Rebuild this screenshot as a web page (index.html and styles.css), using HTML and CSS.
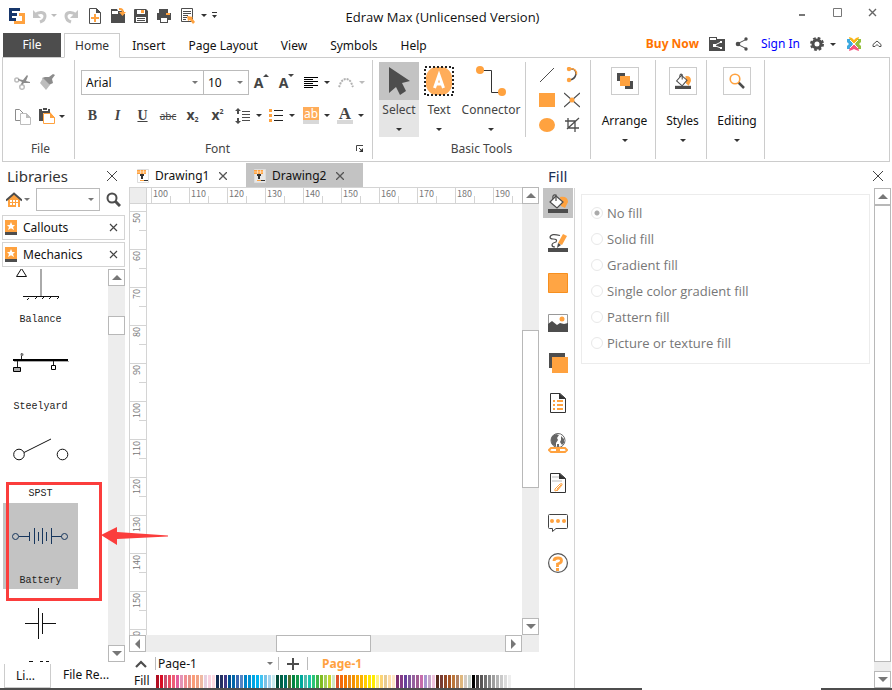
FILE: index.html
```html
<!DOCTYPE html>
<html lang="en">
<head>
<meta charset="utf-8">
<title>Edraw Max (Unlicensed Version)</title>
<link rel="stylesheet" href="styles.css">
</head>
<body>
<header class="titlebar">
  <div class="quick">
    <svg class="logo" width="17" height="16" viewBox="0 0 17 16" shape-rendering="crispEdges"><path fill="#17366b" d="M1 0h11v3H4v2h5v3H4v2h4v3H1z"/><path fill="#ffa23f" d="M11 5h6v11H6v-3h8V8h-3z"/></svg>
    <button class="tool" aria-label="Undo"><svg width="16" height="16" viewBox="0 0 16 16"><path fill="none" stroke="#c4c4c4" stroke-width="3" d="M3 7C7 3 13 4 13 8c0 3-2 5-5 6"/><path fill="#c4c4c4" d="M1 2v8h8z"/></svg></button>
    <span class="caret pale"></span>
    <button class="tool redo" aria-label="Redo"><svg width="16" height="16" viewBox="0 0 16 16"><path fill="none" stroke="#c4c4c4" stroke-width="3" d="M13 7C9 3 3 4 3 8c0 3 2 5 5 6"/><path fill="#c4c4c4" d="M15 2v8H7z"/></svg></button>
    <button class="tool wide" aria-label="New"><svg width="16" height="16" viewBox="0 0 16 16"><path fill="#fff" stroke="#4d4d4d" d="M2.500.5h7l4 4v11h-11z"/><path fill="#4d4d4d" d="M9 0l5 5H9z"/><path stroke="#ffa23f" stroke-width="2" d="M4 10h8M8 6v8"/></svg></button>
    <button class="tool wide" aria-label="Open"><svg width="16" height="16" viewBox="0 0 16 16"><path fill="#4d4d4d" d="M1 1h6l1 2h6v3h1v9H1z"/><path fill="#fff" d="M2 3h6v3H2z"/><path fill="none" stroke="#ffa23f" stroke-width="2" d="M9 1h1q3 0 3 4"/><path fill="#ffa23f" d="M9 4h7l-3.500 4z"/></svg></button>
    <button class="tool wide" aria-label="Save"><svg width="16" height="16" viewBox="0 0 16 16"><path fill="#4d4d4d" d="M1 2q0-1 1-1h11l2 2v12H1z"/><path fill="#fff" d="M4 2h8v4H4zM3 9h10v5H3z"/><path fill="#ffa23f" d="M8 2h3v3H8z"/><path stroke="#4d4d4d" d="M4 10.500h8M4 12.500h8"/></svg></button>
    <button class="tool wide" aria-label="Print"><svg width="16" height="16" viewBox="0 0 16 16"><path fill="#4d4d4d" d="M3 1h9v4h3v7h-3v3H4v-3H1V5h2z"/><path fill="#fff" d="M5 10h6v4H5z"/><path fill="#ffa23f" d="M10 5h4v2h-4z"/></svg></button>
    <button class="tool wide" aria-label="Preview"><svg width="16" height="16" viewBox="0 0 16 16"><path fill="#fff" stroke="#4d4d4d" d="M2.500.5h11v13h-11z"/><path stroke="#4d4d4d" d="M4 3.500h8M4 5.500h8M4 7.500h5M4 9.500h4M4 11.500h3"/><path fill="#ffa23f" d="M8 8l6 1-1 1 3 4-2 2-3-4-2 1z"/></svg></button>
    <span class="caret"></span>
    <button class="tool more" aria-label="Customize"><svg width="7" height="7" viewBox="0 0 7 7"><path fill="#333" d="M1 0h5v1H1zM1 3h5L3.500 6z"/></svg></button>
  </div>
  <h1 class="title">Edraw Max (Unlicensed Version)</h1>
  <div class="window-buttons">
    <button class="tool" aria-label="Minimize"><svg width="9" height="9" viewBox="0 0 9 9"><path fill="#777" d="M1 6h6v2H1z"/></svg></button>
    <button class="tool" aria-label="Maximize"><svg width="9" height="9" viewBox="0 0 9 9"><path fill="none" stroke="#777" d="M.5.5h8v8h-8z"/></svg></button>
    <button class="tool" aria-label="Close window"><svg width="9" height="9" viewBox="0 0 9 9"><path stroke="#666" stroke-width="1.400" d="M1 1l7 7M8 1L1 8"/></svg></button>
  </div>
</header>

<nav class="menubar">
  <button class="file-tab">File</button>
  <button class="menu-tab active">Home</button>
  <button class="menu-tab">Insert</button>
  <button class="menu-tab">Page Layout</button>
  <button class="menu-tab">View</button>
  <button class="menu-tab">Symbols</button>
  <button class="menu-tab">Help</button>
  <div class="account">
    <a class="buy" href="#">Buy Now</a>
    <button class="tool" aria-label="Share folder"><svg width="16" height="14" viewBox="0 0 16 14"><path fill="#4d4d4d" d="M0 0h8v2h8v12H0z"/><path fill="#fff" d="M1 1h6v2H1z"/><path stroke="#fff" fill="none" d="M12 5L5 8.500 12 11"/><path fill="#fff" d="M11 4h2v2h-2zM4 7h3v3H4zM11 10h2v2h-2z"/></svg></button>
    <button class="tool" aria-label="Share"><svg width="14" height="14" viewBox="0 0 14 14"><path stroke="#4d4d4d" fill="none" d="M12 2L2 7l10 5"/><circle cx="11" cy="2" r="1.700" fill="#4d4d4d"/><circle cx="3" cy="7" r="2.300" fill="#4d4d4d"/><circle cx="11" cy="12" r="1.700" fill="#4d4d4d"/></svg></button>
    <a class="signin" href="#">Sign In</a>
    <button class="tool gear" aria-label="Options"><svg width="14" height="14" viewBox="0 0 14 14"><circle cx="7" cy="7" r="4" fill="none" stroke="#4d4d4d" stroke-width="3"/><circle cx="7" cy="7" r="6" fill="none" stroke="#4d4d4d" stroke-width="2" stroke-dasharray="2.700 2.012"/></svg></button>
    <span class="caret"></span>
    <button class="tool brand" aria-label="Community"><svg width="16" height="16" viewBox="0 0 16 16"><path fill="#fdb515" d="M3 1l3 1 2 2 2-2 3-1-1 4-4 3-4-3z"/><path fill="#3ba9e0" d="M1 3h3l3 5-3 5H1V10l2-2-2-2z"/><path fill="#94c13d" d="M15 3h-3L9 8l3 5h3v-3l-2-2 2-2z"/><path fill="#f8537e" d="M3 15l1-4 4-3 4 3 1 4-3-1-2-1-2 1z"/><path stroke="#fff" d="M4 4l8 8M12 4l-8 8"/></svg></button>
    <button class="tool" aria-label="Collapse ribbon"><svg width="10" height="8" viewBox="0 0 10 8"><path fill="none" stroke="#4d4d4d" d="M1 4.500L5 1l4 3.500v2H7L5 4.500l-2 2H1z"/></svg></button>
  </div>
</nav>

<section class="ribbon">
  <div class="group group-file">
    <div class="group-body clip-grid">
      <button class="tool" aria-label="Cut"><svg width="16" height="16" viewBox="0 0 16 16"><g fill="none" stroke="#bdbdbd" stroke-width="1.500"><circle cx="2.800" cy="6" r="2"/><circle cx="8" cy="13" r="2.300"/></g><path fill="#8c8c8c" d="M4 5l5 1 4-5 1 1-2 5 4 1v1l-6 0-2 2-1-1 1-2-4-2z"/></svg></button>
      <button class="tool" aria-label="Format painter"><svg width="16" height="16" viewBox="0 0 16 16"><path fill="#8c8c8c" d="M14 0l2 1-3 4 1 4-4 2-7-7 3-1 4 0z"/><path fill="#bdbdbd" d="M4 4l7 7-4 5-6-7z"/></svg></button>
      <button class="tool" aria-label="Copy"><svg width="17" height="17" viewBox="0 0 17 17"><path fill="#fff" stroke="#8c8c8c" d="M1.500 1.500h4l4 4v7h-8z"/><path fill="#fff" stroke="#bdbdbd" d="M6.500 5.500h6l4 4v7h-10z"/><path fill="#bdbdbd" d="M12 5l5 5h-5z"/></svg></button>
      <button class="tool paste" aria-label="Paste"><svg width="16" height="16" viewBox="0 0 16 16"><path fill="#4d4d4d" d="M0 1h3v2h6V1h2v4H4v8H0zM4 0h4v2H4z"/><path fill="#fff" stroke="#ffa23f" d="M4.500 5.500h7l4 4v6h-11z"/><path fill="#ffa23f" d="M11 4l5 6h-5z"/></svg><span class="caret"></span></button>
    </div>
    <div class="group-label">File</div>
  </div>

  <div class="group group-font">
    <div class="group-body font-body">
      <div class="tool-row">
        <span class="combo family"><select aria-label="Font"><option>Arial</option></select><span class="caret"></span></span>
        <span class="combo size"><select aria-label="Font size"><option>10</option></select><span class="caret"></span></span>
        <button class="tool key grow" aria-label="Grow font"><b>A</b><span class="up"></span></button>
        <button class="tool key grow" aria-label="Shrink font"><b>A</b><span class="down-mark"></span></button>
        <button class="tool split first" aria-label="Align"><svg width="15" height="12" viewBox="0 0 15 12"><path stroke="#000" d="M0 .5h14M0 2.500h9M0 4.500h14M0 6.500h9M0 8.500h14M0 10.500h9"/></svg><span class="caret"></span></button>
        <button class="tool split" aria-label="Text arc"><svg width="16" height="12" viewBox="0 0 16 12"><path fill="none" stroke="#b0b0b0" stroke-width="2" stroke-dasharray="2 1" d="M1 10q1-2 2-5 5-6 10 0 1 3 2 5"/></svg><span class="caret pale"></span></button>
      </div>
      <div class="tool-row">
        <button class="tool key serif"><b>B</b></button>
        <button class="tool key serif"><b><i>I</i></b></button>
        <button class="tool key serif"><b><u>U</u></b></button>
        <button class="tool key strike"><s>abc</s></button>
        <button class="tool key script"><b>x<sub>2</sub></b></button>
        <button class="tool key script"><b>x<sup>2</sup></b></button>
        <button class="tool split line" aria-label="Line spacing"><svg width="16" height="16" viewBox="0 0 16 16"><path fill="none" stroke="#4d4d4d" d="M7 3.500h8M7 6.500h8M7 9.500h8M7 12.500h8"/><path fill="#4d4d4d" d="M3 0l3 3H4v3H2V3H0zM3 16l3-3H4v-3H2v3H0z"/></svg><span class="caret"></span></button>
        <button class="tool split" aria-label="Bullets"><svg width="15" height="14" viewBox="0 0 15 14" shape-rendering="crispEdges"><path fill="#ffa23f" d="M0 0h3v3H0zM0 5h3v3H0zM0 10h3v3H0z"/><path fill="#222" d="M5 1h9v1H5zM5 6h9v1H5zM5 11h9v1H5z"/></svg><span class="caret"></span></button>
        <button class="tool split" aria-label="Highlight"><span class="swatch-icon mark">ab</span><span class="caret"></span></button>
        <button class="tool split" aria-label="Font color"><span class="swatch-icon ink">A</span><span class="caret"></span></button>
      </div>
    </div>
    <div class="group-label">Font</div>
    <button class="tool launcher" aria-label="Font settings"><svg width="8" height="8" viewBox="0 0 8 8"><path fill="none" stroke="#444" d="M.5 6V.5H7M3 3l3 3"/><path fill="#333" d="M7 3v4H3z"/></svg></button>
  </div>

  <div class="group group-basic">
    <div class="group-body basic-body">
      <button class="big selected"><span class="big-icon"><svg width="22" height="29" viewBox="0 0 22 29"><path fill="#4d4d4d" d="M1 0l21 14-8 2 4 8-6 4-4-8-7 6z"/></svg></span><span>Select</span><span class="caret"></span></button>
      <button class="big"><span class="big-icon"><svg width="30" height="30" viewBox="0 0 30 30"><rect x="2" y="1" width="26" height="28" rx="11" fill="#ffad5a"/><rect x="1" y="1" width="28" height="28" fill="none" stroke="#222" stroke-width="2" stroke-dasharray="2 2"/><path fill="none" stroke="#fff" stroke-width="3" d="M10.500 22L15 9l4.500 13M12 18h6"/></svg></span><span>Text</span><span class="caret"></span></button>
      <button class="big connector"><span class="big-icon"><svg width="30" height="30" viewBox="0 0 30 30"><path fill="none" stroke="#333" d="M4 4.500h11.500v22H26"/><circle cx="4" cy="4" r="4" fill="#ffa23f"/><circle cx="26" cy="26" r="4" fill="#ffa23f"/></svg></span><span>Connector</span><span class="caret"></span></button>
      <div class="shapes">
        <button class="tool" aria-label="Line"><svg width="16" height="16" viewBox="0 0 16 16"><path stroke="#4d4d4d" d="M1 15L15 1"/></svg></button>
        <button class="tool" aria-label="Arc"><svg width="16" height="16" viewBox="0 0 16 16"><path fill="none" stroke="#4d4d4d" stroke-width="1.500" d="M5 2q7-1 7 5-1 5-6 6"/><circle cx="5" cy="2" r="2.200" fill="#ffa23f"/><path fill="none" stroke="#ffa23f" stroke-width="1.500" d="M6 1.500q7 0 6.500 6"/><circle cx="5" cy="13" r="2.200" fill="#ffa23f"/></svg></button>
        <button class="tool" aria-label="Rectangle"><svg width="16" height="14" viewBox="0 0 16 14"><path fill="#ffa23f" d="M0 0h16v14H0z"/></svg></button>
        <button class="tool" aria-label="Cross"><svg width="16" height="16" viewBox="0 0 16 16"><path stroke="#4d4d4d" stroke-width="1.300" d="M0 1l16 14M16 1L0 15"/><circle cx="8" cy="8" r="2.500" fill="#ffa23f"/></svg></button>
        <button class="tool" aria-label="Ellipse"><svg width="16" height="14" viewBox="0 0 16 14"><ellipse cx="8" cy="7" rx="8" ry="7" fill="#ffa23f"/></svg></button>
        <button class="tool" aria-label="Crop"><svg width="16" height="16" viewBox="0 0 16 16"><path fill="none" stroke="#4d4d4d" stroke-width="1.300" d="M4 1v10h11M1 4h10v11M3 12L15 1"/></svg></button>
      </div>
    </div>
    <div class="group-label">Basic Tools</div>
  </div>

  <div class="group"><button class="stack arrange"><span class="frame"><svg width="16" height="16" viewBox="0 0 16 16"><path fill="#4d4d4d" d="M0 0h8v8H0zM8 8h8v8H8z"/><path fill="#ffa23f" d="M3 3h10v10H3z"/></svg></span><span>Arrange</span><span class="caret"></span></button></div>
  <div class="group"><button class="stack styles"><span class="frame"><svg width="16" height="16" viewBox="0 0 20 20"><path fill="#ffa23f" d="M13 4q7-1 7 6l-3 6-3-3z"/><path fill="#fff" stroke="#4d4d4d" stroke-width="1.300" d="M8 3l7 6-6 7-7-6z"/><path fill="none" stroke="#4d4d4d" stroke-width="1.300" d="M6 5q0-5 3-3v6"/><path fill="#4d4d4d" d="M0 16h20v4H0z"/></svg></span><span>Styles</span><span class="caret"></span></button></div>
  <div class="group"><button class="stack editing"><span class="frame"><svg width="16" height="16" viewBox="0 0 16 16"><path stroke="#4d4d4d" stroke-width="2.500" d="M9 9l6 6"/><circle cx="6" cy="6" r="4.800" fill="#fff" stroke="#ffa23f" stroke-width="1.600"/></svg></span><span>Editing</span><span class="caret"></span></button></div>
</section>

<main class="workspace">
  <aside class="libraries">
    <div class="panel-head"><h2>Libraries</h2><button class="tool" aria-label="Close libraries"><svg width="10" height="10" viewBox="0 0 10 10"><path stroke="#444" d="M0 0l10 10M10 0L0 10"/></svg></button></div>
    <div class="search-row">
      <button class="tool home" aria-label="Library menu"><svg width="16" height="16" viewBox="0 0 16 16"><path fill="#ffa23f" d="M2 7l6-5 6 5v8H2z"/><path fill="none" stroke="#4d4d4d" stroke-width="2" d="M0 8.500l8-7 8 7"/><path fill="#fff" d="M4 8h2v2H4zM7 8h2v2H7zM10 8h2v2h-2zM4 11h2v2H4zM7 11h2v2H7zM10 11h2v4h-2z"/></svg><span class="caret soft"></span></button>
      <span class="combo find"><input type="text" aria-label="Search libraries"><span class="caret soft"></span></span>
      <button class="tool" aria-label="Search"><svg width="15" height="15" viewBox="0 0 15 15"><circle cx="6" cy="6" r="4.500" fill="none" stroke="#4d4d4d" stroke-width="2"/><path stroke="#4d4d4d" stroke-width="3" d="M9 9l5 5"/></svg></button>
    </div>
    <div class="library"><svg width="12" height="16" viewBox="0 0 12 16"><path fill="#ffa23f" d="M0 0h12v13H0z"/><path fill="#4d4d4d" d="M0 12h12v3H0z"/><path fill="#fff" d="M6 2l1.300 3H10L8 7l1 3-3-1.800L3 10l1-3-2-2h2.700z"/></svg><span>Callouts</span><button class="tool" aria-label="Close Callouts"><svg width="9" height="9" viewBox="0 0 9 9"><path stroke="#444" stroke-width="1.200" d="M1 1l7 7M8 1L1 8"/></svg></button></div>
    <div class="library"><svg width="12" height="16" viewBox="0 0 12 16"><path fill="#ffa23f" d="M0 0h12v13H0z"/><path fill="#4d4d4d" d="M0 12h12v3H0z"/><path fill="#fff" d="M6 2l1.300 3H10L8 7l1 3-3-1.800L3 10l1-3-2-2h2.700z"/></svg><span>Mechanics</span><button class="tool" aria-label="Close Mechanics"><svg width="9" height="9" viewBox="0 0 9 9"><path stroke="#444" stroke-width="1.200" d="M1 1l7 7M8 1L1 8"/></svg></button></div>
    <div class="stencil">
      <div class="stencil-view">
        <figure class="shape cut"><svg width="74" height="66" viewBox="0 0 74 66"><path fill="none" stroke="#111" d="M13.500 34.500l5-8 5 8z"/><path stroke="#aaa" stroke-width="2" d="M38 26v28"/><path stroke="#111" d="M20 54.500h36M26 56l-2 2M34 55l-2 2M41 55l-2 2M48 55l-2 2M56 55l-2 2"/></svg><figcaption>Balance</figcaption></figure>
        <figure class="shape"><svg width="74" height="66" viewBox="0 0 74 66"><path fill="#000" d="M10 30h55v2H10z"/><path stroke="#aaa" d="M11 32.500h55"/><path fill="none" stroke="#222" d="M18.500 30v-6M14.500 32v6M50.500 32v5"/><circle cx="19" cy="25.500" r="1.500" fill="#777"/><path fill="#aaa" stroke="#000" d="M10.500 38.500h7v4h-7z"/><path fill="#fff" stroke="#000" d="M48.500 36.500h4v4h-4z"/></svg><figcaption>Steelyard</figcaption></figure>
        <figure class="shape"><svg width="74" height="66" viewBox="0 0 74 66"><g fill="none" stroke="#111"><circle cx="16" cy="38.500" r="5.300"/><circle cx="59.500" cy="38.500" r="5.300"/><path d="M21 36.500l27-13.500"/></g></svg><figcaption>SPST</figcaption></figure>
        <figure class="shape picked"><svg width="74" height="66" viewBox="0 0 74 66"><g fill="none" stroke="#17365d"><circle cx="12.500" cy="33.500" r="3"/><circle cx="61.500" cy="33.500" r="3"/><path d="M16 33.500h11M48 33.500h10.500M26.500 29v9M31.500 25v16M35.500 29v9M39.500 25v16M43.500 29v9M48.500 25v16"/></g></svg><figcaption>Battery</figcaption></figure>
        <figure class="shape partial"><svg width="74" height="80" viewBox="0 0 74 80"><path fill="none" stroke="#111" d="M22 33.500h13M39 33.500h14M35.500 18v31M39.500 23v21M26 71.500h4M37 71.500h3M43 71.500h3"/></svg></figure>
      </div>
      <div class="scroll vertical">
        <button aria-label="Scroll up"><span class="tri up-tri"></span></button>
        <div class="track"><span class="before lib-a"></span><span class="thumb lib-thumb"></span><span class="lib-b"></span></div>
        <button aria-label="Scroll down"><span class="tri down-tri"></span></button>
      </div>
      <svg class="callout" width="164" height="120" viewBox="0 0 164 120"><path fill="none" stroke="#fb3d3c" stroke-width="3" d="M3.500 1.500h93v116h-93z"/><path fill="#fb3d3c" d="M97 53l16-8v5l51 3.500v1L113 57v6z"/></svg>
    </div>
    <div class="side-tabs"><button class="current">Li...</button><button>File Re...</button></div>
  </aside>

  <section class="document">
    <div class="doc-tabs">
      <div class="doc-tab"><svg width="12" height="14" viewBox="0 0 12 14"><path fill="#fff" stroke="#ddd" d="M.5.5h11v13H.5z"/><path fill="#ffa23f" d="M0 1h9v4H0z"/><path stroke="#fff" d="M0 3h9M3.500 1v4M6.500 1v4" stroke-width=".5"/><path fill="#333" d="M3 5h4v2H6v3H4V7H3z"/><path stroke="#ffa23f" d="M3 11.500h4"/><path stroke="#333" d="M7 11.500h4"/></svg><span>Drawing1</span><button class="tool" aria-label="Close Drawing1"><svg width="8" height="8" viewBox="0 0 8 8"><path stroke="#555" stroke-width="1.300" d="M0 0l8 8M8 0L0 8"/></svg></button></div>
      <div class="doc-tab open"><svg width="12" height="14" viewBox="0 0 12 14"><path fill="#e8e8e8" stroke="#ddd" d="M.5.5h11v13H.5z"/><path fill="#ffa23f" d="M0 1h9v4H0z"/><path stroke="#fff" d="M0 3h9M3.500 1v4M6.500 1v4" stroke-width=".5"/><path fill="#333" d="M3 5h4v2H6v3H4V7H3z"/><path stroke="#ffa23f" d="M3 11.500h4"/><path stroke="#333" d="M7 11.500h4"/></svg><span>Drawing2</span><button class="tool" aria-label="Close Drawing2"><svg width="8" height="8" viewBox="0 0 8 8"><path stroke="#555" stroke-width="1.300" d="M0 0l8 8M8 0L0 8"/></svg></button></div>
    </div>
    <div class="sheet">
      <div class="corner"></div>
      <div class="ruler across"><span>100</span><span>110</span><span>120</span><span>130</span><span>140</span><span>150</span><span>160</span><span>170</span><span>180</span><span>190</span></div>
      <div class="ruler down"><span><i>50</i></span><span><i>60</i></span><span><i>70</i></span><span><i>80</i></span><span><i>90</i></span><span><i>100</i></span><span><i>110</i></span><span><i>120</i></span><span><i>130</i></span><span><i>140</i></span><span><i>150</i></span><span><i>160</i></span></div>
      <div class="paper"></div>
      <div class="scroll vertical sheet-v">
        <button aria-label="Scroll up"><span class="tri up-tri"></span></button>
        <div class="track"><span class="doc-a"></span><span class="thumb doc-thumb"></span><span class="doc-b"></span></div>
        <button aria-label="Scroll down"><span class="tri down-tri"></span></button>
      </div>
      <div class="scroll horizontal sheet-h">
        <button aria-label="Scroll left"><span class="tri left-tri"></span></button>
        <div class="track"><span class="page-a"></span><span class="thumb page-thumb"></span><span class="page-b"></span></div>
        <button aria-label="Scroll right"><span class="tri right-tri"></span></button>
      </div>
      <div class="corner-end"></div>
    </div>
    <div class="page-bar">
      <button class="tool" aria-label="Page list"><svg width="12" height="8" viewBox="0 0 12 8"><path fill="none" stroke="#4d4d4d" stroke-width="2.200" d="M1 7l5-5 5 5"/></svg></button>
      <span class="combo page"><select aria-label="Page"><option>Page-1</option></select><span class="caret soft"></span></span>
      <button class="tool add" aria-label="Add page"><svg width="12" height="12" viewBox="0 0 12 12"><path stroke="#4d4d4d" stroke-width="2" d="M0 6h12M6 0v12"/></svg></button>
      <button class="page-tab">Page-1</button>
    </div>
    <div class="palette"><span class="palette-name">Fill</span>
      <ul>
        <li style="background:#b10e22"></li><li style="background:#d80d24"></li><li style="background:#c7506f"></li><li style="background:#e84a5f"></li><li style="background:#ee5c76"></li><li style="background:#e45c9c"></li><li style="background:#e394b6"></li><li style="background:#ef8d93"></li><li style="background:#e99389"></li><li style="background:#fb9c78"></li><li style="background:#f2a184"></li><li style="background:#efb9a3"></li><li style="background:#e7cfe0"></li><li style="background:#fbd1df"></li><li style="background:#fddbe2"></li>
        <li style="background:#112a52"></li><li style="background:#243062"></li><li style="background:#3d3784"></li><li style="background:#00508f"></li><li style="background:#0066a9"></li><li style="background:#3867b0"></li><li style="background:#5485c3"></li><li style="background:#0083c8"></li><li style="background:#0092d2"></li><li style="background:#00a5e3"></li><li style="background:#00b3ef"></li><li style="background:#41c4f3"></li><li style="background:#79c2e6"></li><li style="background:#a2d3ee"></li><li style="background:#c8e9ef"></li>
        <li style="background:#004a38"></li><li style="background:#006246"></li><li style="background:#006f63"></li><li style="background:#52702f"></li><li style="background:#008542"></li><li style="background:#159a49"></li><li style="background:#00a99d"></li><li style="background:#56b9ab"></li><li style="background:#19c4ae"></li><li style="background:#2bc477"></li><li style="background:#3cb54a"></li><li style="background:#82bd22"></li><li style="background:#a2ce5c"></li><li style="background:#c4d82e"></li><li style="background:#cfe5c4"></li>
        <li style="background:#dd5126"></li><li style="background:#f26a0b"></li><li style="background:#f27a00"></li><li style="background:#e98a18"></li><li style="background:#f39200"></li><li style="background:#fba905"></li><li style="background:#f9b000"></li><li style="background:#ffce00"></li><li style="background:#ffe500"></li><li style="background:#ffec00"></li><li style="background:#fff280"></li><li style="background:#fcd474"></li><li style="background:#e7cb91"></li><li style="background:#ffdca5"></li><li style="background:#ffe7c6"></li>
        <li style="background:#7a2d70"></li><li style="background:#843b86"></li><li style="background:#66419b"></li><li style="background:#80579c"></li><li style="background:#95619e"></li><li style="background:#9f5c91"></li><li style="background:#c76cab"></li><li style="background:#a894ce"></li><li style="background:#c6a4ca"></li><li style="background:#eec2dd"></li>
        <li style="background:#55281b"></li><li style="background:#793c32"></li><li style="background:#914726"></li><li style="background:#a65425"></li><li style="background:#bc763a"></li><li style="background:#b18163"></li><li style="background:#dfb77d"></li><li style="background:#d3cac1"></li><li style="background:#c6d1c9"></li>
        <li style="background:#000"></li><li style="background:#3f3c3d"></li><li style="background:#595656"></li><li style="background:#717070"></li><li style="background:#888"></li><li style="background:#9f9f9f"></li><li style="background:#b5b5b5"></li><li style="background:#c9c9c9"></li><li style="background:#dcdcdc"></li><li style="background:#eee"></li>
      </ul>
    </div>
  </section>

  <aside class="inspector">
    <div class="panel-head"><h2>Fill</h2><button class="tool" aria-label="Close fill panel"><svg width="10" height="10" viewBox="0 0 10 10"><path stroke="#444" d="M0 0l10 10M10 0L0 10"/></svg></button></div>
    <div class="inspector-body">
      <nav class="dock">
        <button class="on" aria-label="Fill"><svg width="20" height="20" viewBox="0 0 20 20"><path fill="#ffa23f" d="M12 4q8-1 8 5l-3 6-4-2z"/><path fill="#fff" stroke="#4d4d4d" stroke-width="1.200" d="M8 3l7 6-6 6-7-6z"/><path fill="none" stroke="#4d4d4d" stroke-width="1.200" d="M5 6q-1-5 3-4v6"/><path fill="#4d4d4d" d="M0 16h20v4H0z"/></svg></button>
        <button aria-label="Line"><svg width="20" height="20" viewBox="0 0 20 20"><path fill="none" stroke="#4d4d4d" stroke-width="1.200" d="M12 2.500Q3 0 2 4q0 2 3 2 5 0 3 3-4 1-4 3 0 2 3 2"/><path fill="#ffa23f" d="M15 1l4 2-5 9-4-2z"/><path fill="#4d4d4d" d="M10 10l3 2-4 3zM0 15h20v4H0z"/></svg></button>
        <button aria-label="Color"><svg width="20" height="20" viewBox="0 0 20 20"><path fill="#ffa544" stroke="#f78f1e" d="M.5.5h19v19H.5z"/></svg></button>
        <button aria-label="Picture"><svg width="20" height="18" viewBox="0 0 20 18"><path fill="#fff" stroke="#999" d="M.5.5h19v17H.5z"/><path fill="#4d4d4d" d="M0 10l4-3 5 4 3-2 4 1 4-1v9H0z"/><circle cx="14" cy="5" r="2.500" fill="#ffa23f"/></svg></button>
        <button aria-label="Shadow"><svg width="20" height="20" viewBox="0 0 20 20"><path fill="#4d4d4d" d="M1 0h16v15H1z"/><path fill="#ffa23f" d="M4 4h16v16H4z"/></svg></button>
        <button aria-label="Page"><svg width="18" height="20" viewBox="0 0 18 20"><path fill="#fff" stroke="#333" d="M1.500.5H11l5.500 5v14h-15z"/><path fill="#333" d="M10 0l7 6h-7z"/><path fill="#ffa23f" d="M4 7h2v2H4zM8 7h6v2H8zM4 11h2v2H4zM8 11h6v2H8zM4 15h2v2H4zM8 15h6v2H8z"/></svg></button>
        <button aria-label="Hyperlink"><svg width="20" height="20" viewBox="0 0 20 20"><circle cx="10" cy="7.500" r="7" fill="#fff" stroke="#666"/><path fill="#666" d="M4 3l4-2 3 1-2 3 1 2-2 3v4l-4-3-1-4zM13 3l3 3v4l-2 2-2-3 1-2zM9 11h2v4H9z"/><path fill="#fff" stroke="#ffa23f" stroke-width="2" d="M3 15h6v4H3l-2-2zM11 15h6l2 2-2 2h-6z"/></svg></button>
        <button aria-label="Attachment"><svg width="18" height="20" viewBox="0 0 18 20"><path fill="#fff" stroke="#333" d="M1.500.5H11l5.500 5v14h-15z"/><path fill="#333" d="M10 0l7 6h-7z"/><path fill="#ddd" d="M3 3h7v2H3zM3 7h10v2H3z"/><path fill="none" stroke="#ffa23f" d="M12 12l-5 6q-2 0-1-2l5-5q3-1 2 1l-5 6M8 16l4-4"/></svg></button>
        <button aria-label="Comment"><svg width="20" height="20" viewBox="0 0 20 20"><path fill="#fff" stroke="#444" d="M1.500 1.500h17q1 0 1 1v12q0 1-1 1H8l-3.500 3v-3h-3q-1 0-1-1v-12q0-1 1-1z"/><circle cx="4" cy="8" r="2" fill="#ffa23f"/><circle cx="10" cy="8" r="2" fill="#ffa23f"/><circle cx="16" cy="8" r="2" fill="#ffa23f"/></svg></button>
        <button aria-label="Help"><svg width="20" height="20" viewBox="0 0 20 20"><circle cx="10" cy="10" r="9.400" fill="#fff" stroke="#555" stroke-width="1.200"/><path fill="none" stroke="#ffa23f" stroke-width="2.800" d="M6 8q0-3 4-3 3.500 0 3.500 2.500T9.500 11v3"/><path fill="#ffa23f" d="M8 15h3v3H8z"/></svg></button>
      </nav>
      <div class="options">
        <fieldset>
          <label><input type="radio" name="fill" checked>No fill</label>
          <label><input type="radio" name="fill">Solid fill</label>
          <label><input type="radio" name="fill">Gradient fill</label>
          <label><input type="radio" name="fill">Single color gradient fill</label>
          <label><input type="radio" name="fill">Pattern fill</label>
          <label><input type="radio" name="fill">Picture or texture fill</label>
        </fieldset>
      </div>
      <div class="scroll vertical">
        <button aria-label="Scroll up"><span class="tri up-tri"></span></button>
        <div class="track"><span class="thumb full"></span><span class="rest"></span></div>
        <button aria-label="Scroll down"><span class="tri down-tri"></span></button>
      </div>
    </div>
  </aside>
</main>
<footer class="edge"><span class="edge-left"></span><span class="edge-right"></span></footer>
</body>
</html>
```
FILE: styles.css
```css
* { box-sizing: border-box; }
body {
  margin: 0;
  height: 100vh;
  display: flex;
  flex-direction: column;
  overflow: hidden;
  background: #fff;
  color: #111;
  font: 12px/16px "Noto Sans", "Open Sans", sans-serif;
}
button, input, select { font: inherit; color: inherit; margin: 0; }
button { border: 0; background: none; padding: 0; white-space: nowrap; }
h1, h2, figure, ul { margin: 0; padding: 0; }
svg { display: block; flex: none; }
.tool { display: flex; align-items: center; justify-content: center; flex: none; }
.caret {
  flex: none;
  width: 0;
  border: 3px solid transparent;
  border-top-color: #333;
  border-bottom: 0;
}
.caret.pale { border-top-color: #bbb; }
.caret.soft { border-top-color: #777; }

/* Title bar */
.titlebar {
  flex: none;
  height: 33px;
  display: grid;
  grid-template-columns: 1fr auto 1fr;
  align-items: center;
  padding: 0 15px 2px 8px;
}
.quick { display: flex; align-items: center; }
.quick .logo { margin-right: 7px; }
.quick .caret { margin-left: 3px; }
.quick .redo { margin: 0 4px 0 6px; }
.quick .wide { width: 23px; }
.quick .more { margin-left: 4px; }
.title { font: 400 13px/18px "Open Sans", "Noto Sans", sans-serif; padding-top: 2px; }
.window-buttons { display: flex; justify-content: flex-end; gap: 26px; padding-bottom: 6px; }

/* Menu bar */
.menubar {
  flex: none;
  height: 25px;
  display: flex;
  align-items: stretch;
  gap: 1px;
  padding: 0 10px 0 3px;
  margin-bottom: -1px;
  position: relative;
}
.file-tab { width: 58px; height: 24px; margin-right: 2px; background: #4d4d4d; color: #fff; }
.menu-tab { padding: 0 11px; }
.menu-tab.active { background: #fff; border: 1px solid #ccc; border-bottom-color: #fff; color: #333; padding: 0 10px; }
.account { margin-left: auto; display: flex; align-items: center; gap: 10px; padding-bottom: 3px; }
.account a { text-decoration: none; }
.buy { color: #ff7300; font-weight: 700; }
.signin { color: #00f; margin-left: 2px; }
.account .caret { margin-left: -4px; }

/* Ribbon */
.ribbon {
  flex: none;
  height: 105px;
  margin: 0 2px;
  display: flex;
  border: 1px solid #ccc;
  padding: 2px 0;
}
.group { display: flex; flex-direction: column; border-right: 1px solid #ccc; position: relative; }
.group-body { flex: 1; }
.group-label { height: 22px; line-height: 24px; text-align: center; color: #444; }
.clip-grid {
  display: grid;
  grid-template-columns: 26px 35px;
  grid-template-rows: 34px 34px;
  padding: 5px 0 0 6px;
}
.clip-grid .tool { justify-content: center; }
.clip-grid .tool:nth-child(2) { padding-right: 11px; }
.paste { gap: 4px; padding-right: 2px; }
.group-file { width: 72px; }
.group-file .group-label { padding-left: 4px; }
.group-font { width: 298px; }
.group-font .group-label { padding-right: 12px; }
.group-basic { width: 218px; }
.font-body { padding: 10px 0 0 6px; }
.tool-row { display: flex; height: 25px; align-items: center; margin-bottom: 8px; color: #444; }
.combo { display: flex; align-items: center; position: relative; border: 1px solid #bbb; height: 25px; flex: none; }
.combo select, .combo input {
  appearance: none;
  border: 0;
  outline: 0;
  background: none;
  width: 100%;
  height: 100%;
  padding: 0 4px;
  color: #111;
}
.combo .caret { position: absolute; right: 5px; pointer-events: none; }
.combo .caret { border-top-color: #777; }
.family { width: 123px; }
.size { width: 46px; margin-left: -1px; }
.key { width: 25px; height: 25px; }
.grow b { font-size: 14px; line-height: 25px; }
.up, .down-mark { align-self: flex-start; margin-top: 4px; border: 3px solid transparent; border-top: 0; border-bottom-color: #444; }
.down-mark { border-top: 3px solid #444; border-bottom: 0; }
.split { width: 34px; gap: 5px; justify-content: flex-start; }
.split.first { margin-left: 5px; }
.split.line { margin-left: 4px; }
.serif { font: 14px/16px "Liberation Serif", serif; padding-right: 2px; }
.strike { font-size: 10px; padding-right: 1px; }
.script { font-size: 14px; line-height: 16px; padding-right: 2px; padding-bottom: 2px; }
.script sub, .script sup { font-size: 7px; line-height: 7px; }
.script sub { vertical-align: -2px; }
.swatch-icon { width: 16px; height: 17px; line-height: 13px; text-align: center; border-bottom: 4px solid #d8d8d8; }
.mark { background: #ffad5a; background-clip: padding-box; color: #fff; font-size: 12px; }
.ink { font: 700 17px/13px "Liberation Serif", serif; color: #444; }
.launcher { position: absolute; right: 8px; bottom: 6px; }

.basic-body { display: flex; padding: 2px 0 0 6px; color: #444; }
.big { width: 40px; height: 75px; display: flex; flex-direction: column; align-items: center; gap: 2px; }
.big-icon { width: 100%; height: 38px; display: flex; align-items: center; justify-content: center; }
.big .caret { margin-top: 8px; }
.big.selected { background: #e5e5e5; }
.big.selected .big-icon { background: #c3c3c3; }
.big.connector { width: 64px; }
.shapes {
  display: grid;
  grid-template-columns: 25px 25px;
  grid-template-rows: 25px 25px 25px;
  height: 75px;
  margin-left: 2px;
  padding-left: 8px;
  border-left: 1px solid #ccc;
}
.stack { display: flex; flex-direction: column; align-items: center; padding: 7px 0 0 3px; color: #111; }
.frame { width: 28px; height: 28px; border: 1px solid #ccc; display: flex; align-items: center; justify-content: center; margin-bottom: 18px; }
.stack .caret { margin-top: 10px; }
.arrange { width: 64px; }
.styles { width: 50px; }
.editing { width: 57px; }

/* Workspace */
.workspace { flex: 1; min-height: 0; display: flex; }
.panel-head { display: flex; align-items: center; justify-content: space-between; height: 26px; flex: none; padding-top: 2px; }
.panel-head h2 { font-size: 15px; line-height: 20px; font-weight: 400; color: #333; }

.libraries { width: 125px; flex: none; display: flex; flex-direction: column; padding-left: 2px; margin-right: 4px; }
.libraries .panel-head { padding: 2px 8px 0 5px; }
.search-row { display: flex; align-items: center; height: 23px; margin-bottom: 4px; padding-left: 4px; gap: 6px; flex: none; }
.home { gap: 2px; }
.find { width: 64px; height: 23px; }
.library {
  display: flex;
  align-items: center;
  height: 25px;
  flex: none;
  margin-bottom: 2px;
  padding: 0 6px 0 2px;
  border: 1px solid #d4d4d4;
}
.library span { flex: 1; padding-left: 6px; }
.stencil { flex: 1; min-height: 0; display: flex; position: relative; }
.stencil-view { flex: 1; overflow: hidden; padding-left: 1px; }
.shape { width: 75px; height: 87px; }
.shape.cut { height: 60px; display: flex; flex-direction: column; justify-content: flex-end; overflow: hidden; }
.shape.picked { background: #c3c3c3; background-clip: content-box; padding-bottom: 1px; }
.shape figcaption { height: 20px; text-align: center; color: #222; font: 10px/24px "Liberation Mono", monospace; }
.shape.cut figcaption { margin-bottom: 1px; }
.callout { position: absolute; left: 2px; top: 213px; z-index: 2; pointer-events: none; }
.side-tabs { display: flex; height: 26px; flex: none; padding-left: 2px; }
.side-tabs button { padding: 0 12px; }
.side-tabs .current { width: 47px; margin-top: 2px; border: 1px solid #ccc; border-top: 0; padding: 0 15px 0 11px; }

/* Scroll bars */
.scroll { display: flex; background: #ededed; flex: none; }
.scroll button { width: 17px; height: 17px; flex: none; border: 1px solid #b8b8b8; background: #fff; display: flex; align-items: center; justify-content: center; }
.vertical { width: 17px; flex-direction: column; }
.track { flex: 1; display: flex; min-width: 0; min-height: 0; }
.vertical .track { flex-direction: column; }
.thumb { background: #fff; border: 1px solid #b8b8b8; }
.tri { border: 5px solid transparent; }
.up-tri { border-bottom-color: #777; border-top: 0; }
.down-tri { border-top-color: #777; border-bottom: 0; }
.left-tri { border-right-color: #777; border-left: 0; }
.right-tri { border-left-color: #777; border-right: 0; }
.lib-a { flex: 30; }
.lib-thumb { flex: none; height: 19px; }
.lib-b { flex: 309; }
.doc-a { flex: 127; }
.doc-thumb { flex: 156; }
.doc-b { flex: 131; }
.page-a { flex: 131; }
.page-thumb { flex: 93; }
.page-b { flex: 135; }
.full { flex: 457; }
.rest { flex: 9; }

/* Document */
.document { flex: 1; min-width: 0; display: flex; flex-direction: column; }
.doc-tabs { display: flex; height: 25px; padding-top: 1px; flex: none; }
.doc-tab { display: flex; align-items: center; width: 117px; padding: 1px 0 0 8px; }
.doc-tab span { padding: 0 10px 0 6px; }
.doc-tab.open { background: #c3c3c3; }
.sheet {
  flex: 1;
  min-height: 0;
  display: grid;
  grid-template-columns: 18px minmax(0, 1fr) 17px;
  grid-template-rows: 17px minmax(0, 1fr) 17px;
}
.corner { background: #ededed; border: 1px solid #d4d4d4; }
.ruler { overflow: hidden; display: flex; color: #777; font: 9px/12px "Noto Sans CJK SC", "Noto Sans", sans-serif; }
.ruler span { flex: none; background: linear-gradient(#d4d4d4, #d4d4d4) no-repeat; }
.across { border: solid #d4d4d4; border-width: 1px 0; padding-left: 4px; }
.across span { width: 38px; border-left: 1px solid #d4d4d4; padding-left: 1px; background-size: 1px 7px; background-position: 18px 100%; }
.down { border: solid #d4d4d4; border-width: 0 1px; flex-direction: column; padding-top: 7px; }
.down span { height: 38px; border-top: 1px solid #d4d4d4; padding: 1px 0 0 1px; background-size: 7px 1px; background-position: 100% 18px; }
.down i { display: block; width: 12px; font-style: normal; writing-mode: vertical-rl; transform: rotate(180deg); }
.sheet-v { grid-column: 3; grid-row: 1 / 3; }
.sheet-h { grid-column: 1 / 3; grid-row: 3; }
.corner, .across { grid-row: 1; }
.down, .paper { grid-row: 2; }
.corner-end { grid-column: 3; grid-row: 3; background: #ededed; }

.page-bar { display: flex; align-items: center; height: 22px; flex: none; padding: 1px 0 0 6px; }
.page { width: 124px; height: 13px; margin-left: 8px; border-width: 0 1px; }
.page select { padding: 0 2px; line-height: 13px; overflow: visible; }
.add { padding: 0 8px; }
.page-tab { color: #ffa23f; font-weight: 700; border-left: 1px solid #bbb; line-height: 13px; padding-left: 14px; }
.palette { display: flex; align-items: center; height: 14px; flex: none; padding-left: 5px; gap: 6px; line-height: 14px; }
.palette ul { display: flex; gap: 1px; list-style: none; }
.palette li { width: 3px; height: 13px; }

/* Inspector */
.inspector { width: 349px; flex: none; display: flex; flex-direction: column; margin-left: 4px; }
.inspector .panel-head { padding: 2px 9px 0 5px; }
.inspector .panel-head h2 { color: #1e3056; }
.inspector-body { flex: 1; min-height: 0; display: flex; padding-right: 1px; }
.dock { width: 32px; border-right: 1px solid #d4d4d4; display: flex; flex-direction: column; gap: 10px; }
.dock button { width: 30px; height: 30px; flex: none; display: flex; align-items: center; justify-content: center; }
.dock .on { background: #c3c3c3; }
.options { flex: 1; padding: 6px 4px 0 6px; }
fieldset { margin: 0; border: 1px solid #ececec; padding: 5px 0 7px 9px; color: #777; font: 13px/16px "Open Sans", "Noto Sans", sans-serif; }
fieldset label { display: flex; align-items: center; height: 26px; gap: 4px; }
fieldset input { appearance: none; width: 12px; height: 12px; margin: 0; border: 1px solid #e8e8e8; border-radius: 50%; background: #fff; }
fieldset input:checked { background: radial-gradient(circle, #aaa 2px, #fff 3px); }

.edge { flex: none; height: 2px; display: flex; justify-content: space-between; }
.edge-left { width: 72%; background: #4d4d4d; }
.edge-right { width: 8%; background: #4d4d4d; }
```
